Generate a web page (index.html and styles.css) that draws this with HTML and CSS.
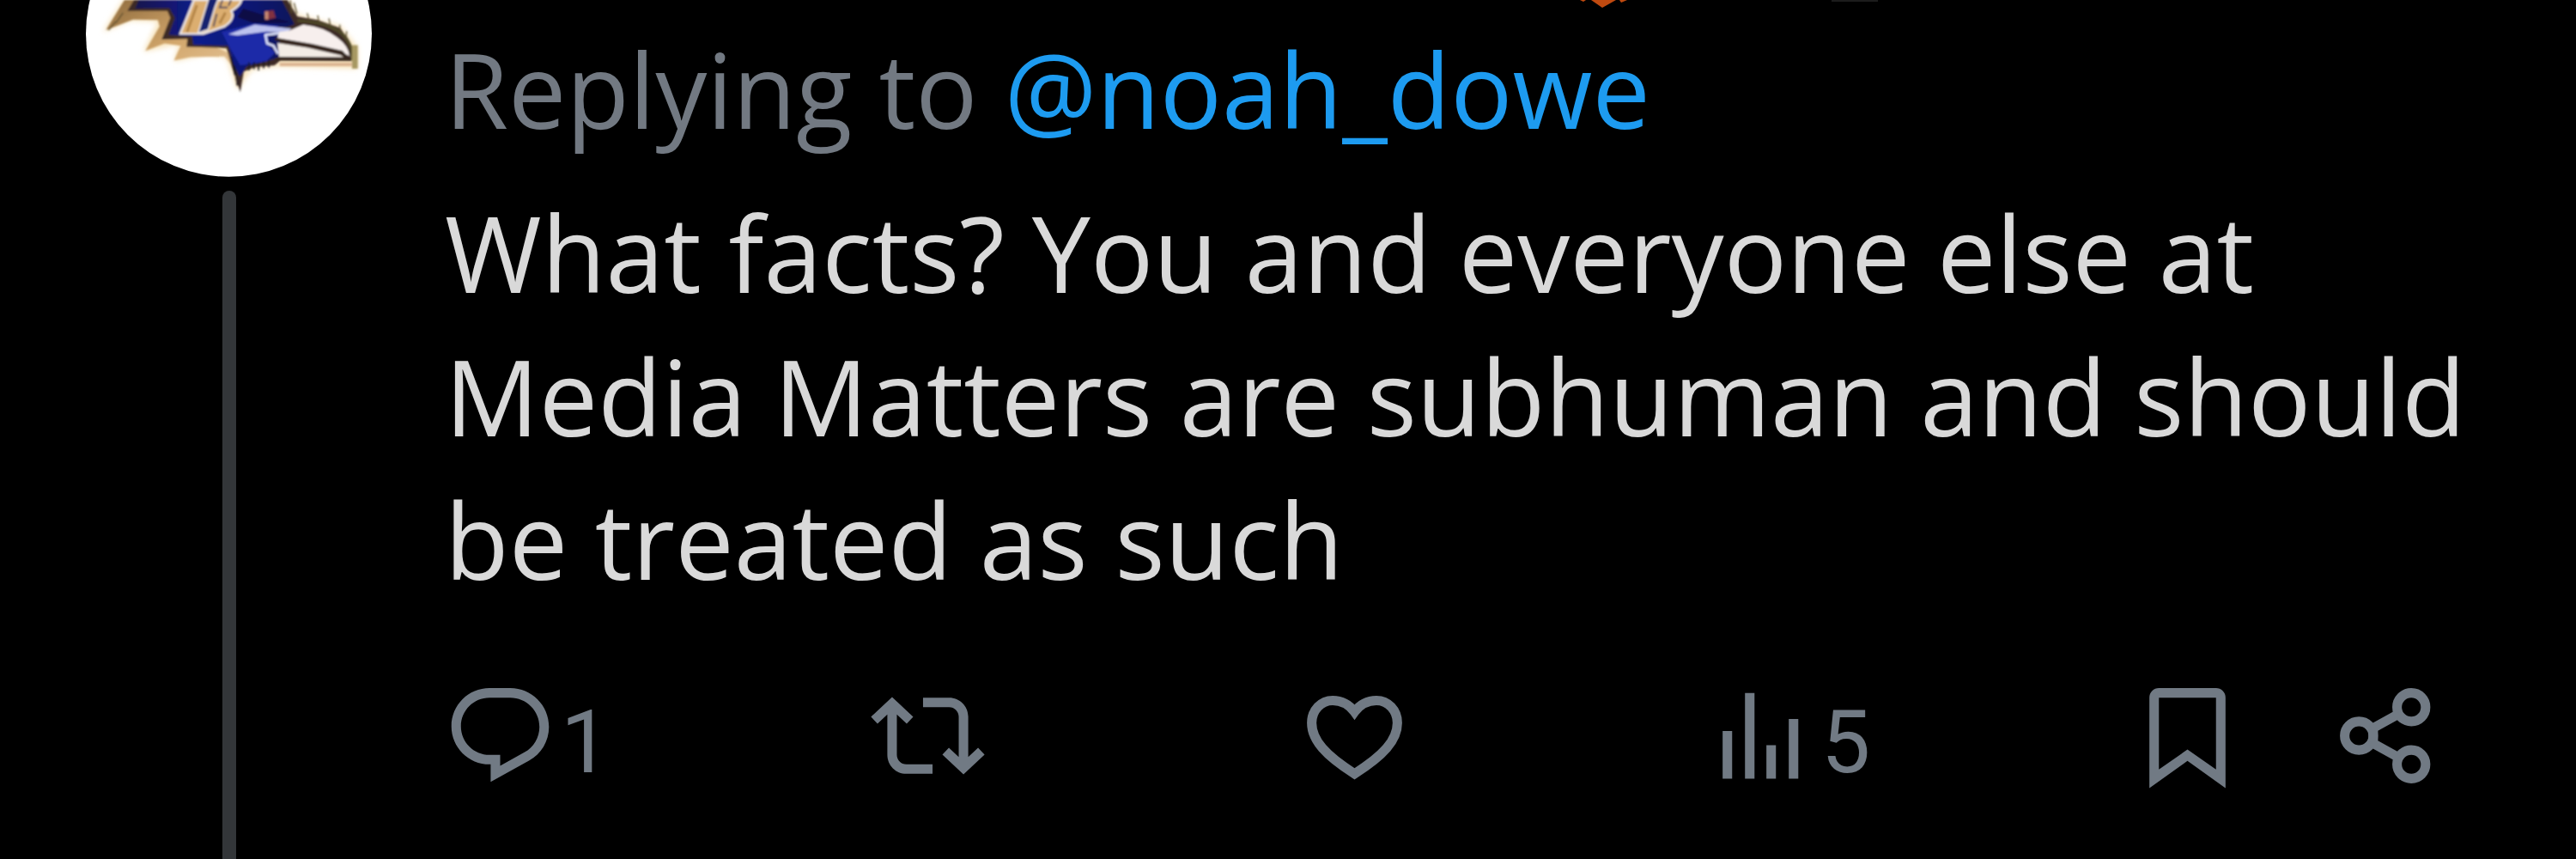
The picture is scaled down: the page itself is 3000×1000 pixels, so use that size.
FILE: index.html
```html
<!DOCTYPE html>
<html lang="en">
<head>
<meta charset="utf-8">
<meta name="viewport" content="width=device-width, initial-scale=1">
<title>Post</title>
<link rel="stylesheet" href="styles.css">
</head>
<body>
<article class="post">
  <div class="rail">
    <svg class="avatar" viewBox="60 0 1000 618" role="img" aria-label="Profile picture">
      <defs>
        <filter id="glow" x="-10%" y="-10%" width="120%" height="130%"><feGaussianBlur stdDeviation="9"/></filter>
        <filter id="soft" x="-5%" y="-5%" width="110%" height="110%"><feGaussianBlur stdDeviation="3"/></filter>
        <linearGradient id="gold" x1="0" y1="0" x2="1" y2="1"><stop offset="0" stop-color="#8d6a3c"/><stop offset=".5" stop-color="#d3a76c"/><stop offset="1" stop-color="#e6c9a2"/></linearGradient>
        <linearGradient id="navy" x1="0" y1="0" x2="1" y2="0"><stop offset="0" stop-color="#15154e"/><stop offset=".4" stop-color="#101c8c"/><stop offset="1" stop-color="#11145c"/></linearGradient>
      </defs>
      <circle cx="560" cy="118" r="500" fill="#fff"/>
      <path filter="url(#glow)" fill="#f8e4bd" d="M190 0 L120 112 L215 72 L312 75 L262 180 L385 155 L368 215 L480 190 L552 202 L590 312 L640 245 L730 232 L1010 240 L1010 165 L950 90 L800 50 L770 0Z"/>
      <g filter="url(#soft)">
        <path fill="url(#gold)" d="M195 0 L130 105 L225 68 L312 70 L318 92 L268 178 L335 152 L392 160 L368 212 L425 200 L545 197 L572 232 L590 312 L590 200 L400 110 L340 0Z"/>
        <path fill="#3c2b25" d="M228 0 L205 38 L345 38 L355 62 L325 138 L415 136 L412 164 L552 168 L568 225 L600 322 L612 250 L650 235 L720 228 L740 212 L985 212 L990 160 L950 98 L870 70 L800 58 L765 0Z"/>
        <path fill="url(#navy)" d="M245 0 L232 30 L352 28 L372 62 L350 122 L432 126 L436 156 L558 160 L575 220 L598 268 L622 232 L725 205 L740 195 L735 105 L790 85 L745 0Z"/>
        <path fill="#dcae70" stroke="#ece6e5" stroke-width="7" d="M438 0 L420 45 L390 118 L470 118 L545 92 Q585 65 568 38 Q600 20 604 0Z"/>
        <path fill="#15216f" stroke="#ece6e5" stroke-width="5" d="M490 -8 L452 116 L488 104 L512 25 L525 -8Z"/>
        <path fill="none" stroke="#5a5060" stroke-width="6" d="M538 0 l-10 26 h28 M518 48 l-12 45 M568 0 l-9 20"/>
        <path fill="none" stroke="#b28345" stroke-width="9" d="M448 18 L414 112 M548 44 L528 82"/>
        <path fill="#0b0b45" d="M610 30 L690 55 L780 78 L650 82 L590 60Z"/>
        <path fill="#82323f" d="M686 40 L716 36 L724 62 L690 70Z"/>
        <path fill="#c98a73" d="M686 40 h12 v28 h-12z"/>
        <path fill="#1a2ba8" d="M535 112 L650 82 L735 90 L695 118 L700 160 L722 185 L690 215 L600 228 L568 175Z"/>
        <path fill="#bcc2ee" d="M558 120 L650 86 L780 100 L760 114 L690 110 L590 124Z"/>
        <path fill="#f7efed" d="M735 112 L775 106 L820 86 Q895 94 940 132 Q978 160 982 195 L950 182 L845 158 L730 136Z"/>
        <path fill="#f3ece5" d="M730 150 L835 167 L950 193 L962 200 L736 198Z"/>
        <path fill="none" stroke="#dce1fa" stroke-width="8" stroke-linejoin="round" d="M735 116 L688 122 L694 152 L716 160 L732 188"/>
        <path fill="none" stroke="#34271f" stroke-width="10" d="M722 136 L850 158 L955 182 L972 200 M722 206 L990 208"/>
        <path fill="none" stroke="#4e4728" stroke-width="11" d="M800 72 Q910 78 958 120 Q990 150 993 208"/>
        <path fill="none" stroke="#dcb592" stroke-width="12" d="M738 225 L990 225"/>
        <path fill="none" stroke="#a79862" stroke-width="20" d="M1001 158 V240"/>
        <path fill="none" stroke="#17131f" stroke-width="5" d="M568 198 l14 66 M580 230 l10 70 M630 218 v28 M648 218 v24 M664 220 v26 M682 215 v24 M700 212 v24"/>
        <path fill="none" stroke="#5a4d2c" stroke-width="4" d="M788 10 l10 38 M775 0 l5 45 M840 68 l-6 -22 M875 78 l-4 -24 M915 90 l-5 -26 M948 112 l0 -26 M970 135 l2 -26 M165 75 l-26 30 M190 45 l-24 34"/>
      </g>
    </svg>
    <div class="thread-line"></div>
  </div>
  <div class="content">
    <svg class="author-tail" viewBox="0 0 350 10" aria-hidden="true">
      <path fill="#c04a10" d="M13 0h29l-16 9zM0 0h7l-3 2zM46 0h9l-7 3z"/>
      <path fill="#1c1c1c" d="M293 0h54v2h-54z"/>
    </svg>
    <p class="replying">Replying to <a href="#noah_dowe">@noah_dowe</a></p>
    <p class="text">What facts? You and everyone else at Media Matters are subhuman and should be treated as such</p>
    <div class="actions">
      <button type="button" aria-label="Reply"><svg class="icon" viewBox="0 0 24 24"><path d="M1.751 10c0-4.42 3.584-8 8.005-8h4.366c4.49 0 8.129 3.64 8.129 8.13 0 2.96-1.607 5.68-4.196 7.11l-8.054 4.46v-3.69h-.067c-4.49.1-8.183-3.51-8.183-8.01zm8.005-6c-3.317 0-6.005 2.69-6.005 6 0 3.37 2.77 6.08 6.138 6.01l.351-.01h1.761v2.3l5.087-2.81c1.951-1.08 3.163-3.13 3.163-5.36 0-3.39-2.744-6.13-6.129-6.13H9.756z"/></svg><span class="count">1</span></button>
      <button type="button" aria-label="Repost"><svg class="icon" viewBox="0 0 24 24"><path d="M4.5 3.88l4.432 4.14-1.364 1.46L5.5 7.55V16c0 1.1.896 2 2 2H13v2H7.5c-2.209 0-4-1.79-4-4V7.55L1.432 9.48.068 8.02 4.5 3.88zM16.5 6H11V4h5.5c2.209 0 4 1.79 4 4v8.45l2.068-1.93 1.364 1.46-4.432 4.14-4.432-4.14 1.364-1.46 2.068 1.93V8c0-1.1-.896-2-2-2z"/></svg></button>
      <button type="button" aria-label="Like"><svg class="icon line" viewBox="0 0 24 24"><path d="M12 20C6 16.2 3 13 3 9.3 3 6.6 5 4.6 7.4 4.6 9.3 4.6 10.9 5.5 12 7 13.1 5.5 14.7 4.6 16.6 4.6 19 4.6 21 6.6 21 9.3 21 13 18 16.2 12 20z"/></svg></button>
      <button type="button" aria-label="Views"><svg class="icon" viewBox="0 0 24 24"><path d="M4 11h2v10H4zM8.7 3h2v18h-2zM13.2 14h2v7h-2zM17.9 8.5h2V21h-2z"/></svg><span class="count">5</span></button>
      <button type="button" aria-label="Bookmark"><svg class="icon" viewBox="0 0 24 24"><path fill-rule="evenodd" d="M4 4a2 2 0 0 1 2-2h12a2 2 0 0 1 2 2v19l-8-5.7L4 23zM6 4v15.1l6-4.2 6 4.2V4z"/></svg></button>
      <button type="button" aria-label="Share"><svg class="icon line" viewBox="0 0 24 24"><circle cx="6" cy="12" r="3"/><circle cx="17" cy="6" r="3"/><circle cx="17" cy="18" r="3"/><path d="M8.6 10.6l5.8-3.2M8.6 13.4l5.8 3.2M9 10.8v2.4"/></svg></button>
    </div>
  </div>
</article>
</body>
</html>
```
FILE: styles.css
```css
* {
  box-sizing: border-box;
}

body {
  margin: 0;
  background: #000;
  color: #d9d9d9;
  font-family: "Open Sans", sans-serif;
}

.post {
  display: flex;
  gap: 83px;
  min-height: 100vh;
  padding: 0 100px;
}

.rail {
  display: flex;
  flex: none;
  flex-direction: column;
  align-items: center;
  gap: 16px;
  width: 333px;
}

.avatar {
  display: block;
  width: 100%;
}

.thread-line {
  flex: 1;
  width: 16px;
  border-radius: 8px 8px 0 0;
  background: #333639;
}

.content {
  flex: 1;
  min-width: 0;
  padding-left: 2px;
}

.author-tail {
  display: block;
  width: 350px;
  height: 10px;
  margin-left: 1322px;
}

.replying,
.text {
  margin: 0;
  line-height: 167px;
}

.replying {
  margin-top: 10px;
  color: #727982;
  font-size: 120px;
}

.replying a {
  color: #1d9bf0;
  text-decoration: none;
}

.text {
  margin-top: 24px;
  font-size: 122px;
}

.actions {
  display: grid;
  grid-template-columns: 498fr 497fr 473fr 497fr 233fr 133px;
  margin: 78px 53px 0 -2px;
}

.actions button {
  display: flex;
  align-items: center;
  gap: 4px;
  padding: 0;
  border: 0;
  background: none;
  color: #717a84;
  font-family: Roboto, sans-serif;
  font-size: 102px;
  line-height: 117px;
  cursor: pointer;
}

.count {
  padding-top: 16px;
}

.icon {
  flex: none;
  width: 133px;
  height: 133px;
  fill: currentColor;
}

.icon.line {
  fill: none;
  stroke: currentColor;
  stroke-width: 2;
}
```
